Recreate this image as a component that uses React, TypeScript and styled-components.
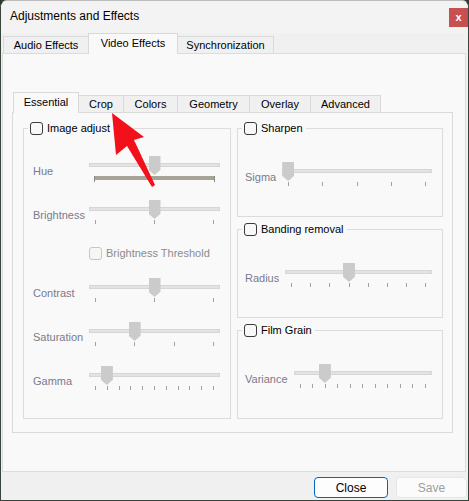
import React from 'react';
import styled, { createGlobalStyle } from 'styled-components';

const GlobalStyle = createGlobalStyle`
  html, body {
    margin: 0;
    padding: 0;
    background: #2d3b33;
  }
  * {
    box-sizing: border-box;
  }
  body {
    font-family: "Liberation Sans", Arial, sans-serif;
    font-size: 11px;
    color: #000;
  }
`;

const Window = styled.div`
    position: relative;
    width: 469px;
    height: 501px;
    display: flex;
    flex-direction: column;
    background: #f0f0f0;
    border: 1px solid #37443c;
    border-top-color: #bcbcbc;
    border-radius: 7px 7px 0 0;
    overflow: hidden;
`;

const TitleBar = styled.div`
    height: 32px;
    flex: none;
    display: flex;
    justify-content: space-between;
    align-items: flex-start;
    padding-left: 9px;
    background: #f3f3f3;
`;

const Title = styled.span`
    line-height: 31px;
    font-size: 12px;
`;

const CloseX = styled.div`
    width: 19px;
    height: 19px;
    margin-top: 7px;
    background: #c75050;
    color: #fff;
    font-size: 11px;
    font-weight: bold;
    display: flex;
    align-items: center;
    justify-content: center;
    padding-bottom: 2px;
`;

const TabBar = styled.div<{ $inset: number }>`
    height: 20px;
    flex: none;
    display: flex;
    align-items: flex-end;
    padding-left: ${p => p.$inset}px;
`;

const Tab = styled.div<{ $active?: boolean; $w: number }>`
    width: ${p => p.$w}px;
    height: ${p => (p.$active ? 21 : 17)}px;
    margin-bottom: ${p => (p.$active ? -1 : 0)}px;
    margin-left: -1px;
    position: relative;
    z-index: ${p => (p.$active ? 2 : 1)};
    display: flex;
    align-items: center;
    justify-content: center;
    padding-bottom: ${p => (p.$active ? 2 : 0)}px;
    background: ${p => (p.$active ? '#f9f9f9' : '#f0f0f0')};
    border: 1px solid #d9d9d9;
    border-bottom: none;
    white-space: nowrap;
    &:first-child {
        margin-left: 0;
    }
`;

const OuterPane = styled.div`
    flex: none;
    height: 419px;
    margin: 0 2px 0 1px;
    padding: 38px 12px 0 9px;
    background: #f9f9f9;
    border: 1px solid #dcdcdc;
`;

const InnerPane = styled.div`
    height: 321px;
    padding: 8px 9px 0 10px;
    background: #f9f9f9;
    border: 1px solid #dadada;
    display: grid;
    grid-template-columns: 208px 206px;
    column-gap: 6px;
    align-items: start;
`;

const Column = styled.div`
    display: flex;
    flex-direction: column;
    gap: 5px;
`;

const Group = styled.fieldset<{ $h: number }>`
    margin: 0;
    padding: 0;
    min-width: 0;
    height: ${p => p.$h}px;
    border: 1px solid #dcdcdc;
`;

const Legend = styled.legend`
    margin-left: 4px;
    padding: 0 3px 0 2px;
    height: 14px;
    display: flex;
    align-items: center;
    gap: 4px;
    line-height: 14px;
`;

const Check = styled.span<{ $disabled?: boolean }>`
    display: inline-block;
    flex: none;
    width: 13px;
    height: 13px;
    border-radius: 3px;
    border: 1px solid ${p => (p.$disabled ? '#c6c6c6' : '#3a3a3a')};
    background: ${p => (p.$disabled ? '#f6f6f6' : '#f8f8f8')};
`;

const LeftRows = styled.div`
    display: flex;
    flex-direction: column;
    gap: 16px;
    padding: 21px 10px 0 9px;
`;

const LeftRow = styled.div`
    display: grid;
    grid-template-columns: 56px 131px;
    align-items: center;
`;

const RightRow = styled.div`
    display: flex;
    align-items: center;
    gap: 6px;
    padding: 27px 10px 0 7px;
`;

const Label = styled.span`
    color: #7a7a8e;
    white-space: nowrap;
    padding-top: 1px;
`;

const OptionRow = styled.div`
    height: 18px;
    padding-left: 56px;
    display: flex;
    align-items: center;
    gap: 4px;
    color: #8c8c8c;
`;

const SliderBox = styled.div`
    position: relative;
    flex: 1;
    height: 28px;
`;

const Track = styled.div`
    margin-top: 7px;
    height: 4px;
    background: #e3e3e3;
    border: 1px solid #d6d6d6;
`;

const Thumb = styled.div`
    position: absolute;
    top: 0;
    width: 12px;
    height: 19px;
    background: #cbcbcb;
    clip-path: polygon(0 0, 100% 0, 100% 72%, 50% 100%, 0 72%);
`;

const Ticks = styled.div`
    margin-top: 9px;
    padding: 0 6px;
    height: 4px;
    display: flex;
    justify-content: space-between;
`;

const Tick = styled.span`
    width: 1px;
    height: 4px;
    background: #a2a298;
`;

const HueBar = styled.div`
    position: relative;
    margin: 9px 5px 0 5px;
    height: 4px;
    background: #a7a396;
    &::before,
    &::after {
        content: '';
        position: absolute;
        top: 0;
        width: 1px;
        height: 6px;
        background: #8e8a7e;
    }
    &::before {
        left: 0;
    }
    &::after {
        right: 0;
    }
`;

const Footer = styled.div`
    flex: 1;
    display: flex;
    justify-content: flex-end;
    align-items: flex-start;
    gap: 8px;
    padding: 5px 1px 0 0;
`;

const Button = styled.div<{ $primary?: boolean; $w: number }>`
    width: ${p => p.$w}px;
    height: 21px;
    display: flex;
    align-items: center;
    justify-content: center;
    border-radius: 4px;
    font-size: 12px;
    background: ${p => (p.$primary ? '#fdfdfd' : '#fbfbfb')};
    border: 1px solid ${p => (p.$primary ? '#0067c0' : '#e6e6e6')};
    color: ${p => (p.$primary ? '#000' : '#9d9d9d')};
`;

const Arrow = styled.svg`
    position: absolute;
    left: 0;
    top: 0;
    pointer-events: none;
`;

const Slider = ({ value, ticks, hue }: { value: number; ticks?: number; hue?: boolean }) => (
    <SliderBox>
        <Track />
        {hue ? (
            <HueBar />
        ) : (
            <Ticks>
                {Array.from({ length: ticks || 0 }).map((_, i) => (
                    <Tick key={i} />
                ))}
            </Ticks>
        )}
        <Thumb style={{ left: `calc(${value} * (100% - 12px))` }} />
    </SliderBox>
);

const outerTabs = [
    { name: 'Audio Effects', w: 86 },
    { name: 'Video Effects', w: 90, active: true },
    { name: 'Synchronization', w: 97 },
];

const innerTabs = [
    { name: 'Essential', w: 66, active: true },
    { name: 'Crop', w: 46 },
    { name: 'Colors', w: 55 },
    { name: 'Geometry', w: 73 },
    { name: 'Overlay', w: 62 },
    { name: 'Advanced', w: 71 },
];

const leftSliders = [
    { name: 'Contrast', value: 0.5, ticks: 3 },
    { name: 'Saturation', value: 1 / 3, ticks: 4 },
    { name: 'Gamma', value: 0.1, ticks: 11 },
];

const rightGroups = [
    { name: 'Sharpen', label: 'Sigma', value: 0, ticks: 5 },
    { name: 'Banding removal', label: 'Radius', value: 3 / 7, ticks: 8 },
    { name: 'Film Grain', label: 'Variance', value: 0.2, ticks: 11 },
];

const App = () => {
    return (
        <>
            <GlobalStyle />
            <Window>
                <TitleBar>
                    <Title>Adjustments and Effects</Title>
                    <CloseX>x</CloseX>
                </TitleBar>

                <TabBar $inset={2}>
                    {outerTabs.map(t => (
                        <Tab key={t.name} $w={t.w} $active={t.active}>{t.name}</Tab>
                    ))}
                </TabBar>

                <OuterPane>
                    <TabBar $inset={1}>
                        {innerTabs.map(t => (
                            <Tab key={t.name} $w={t.w} $active={t.active}>{t.name}</Tab>
                        ))}
                    </TabBar>
                    <InnerPane>
                        <Group $h={298}>
                            <Legend><Check />Image adjust</Legend>
                            <LeftRows>
                                <LeftRow>
                                    <Label>Hue</Label>
                                    <Slider value={0.5} hue />
                                </LeftRow>
                                <LeftRow>
                                    <Label>Brightness</Label>
                                    <Slider value={0.5} ticks={3} />
                                </LeftRow>
                                <OptionRow><Check $disabled />Brightness Threshold</OptionRow>
                                {leftSliders.map(s => (
                                    <LeftRow key={s.name}>
                                        <Label>{s.name}</Label>
                                        <Slider value={s.value} ticks={s.ticks} />
                                    </LeftRow>
                                ))}
                            </LeftRows>
                        </Group>

                        <Column>
                            {rightGroups.map(g => (
                                <Group key={g.name} $h={96}>
                                    <Legend><Check />{g.name}</Legend>
                                    <RightRow>
                                        <Label>{g.label}</Label>
                                        <Slider value={g.value} ticks={g.ticks} />
                                    </RightRow>
                                </Group>
                            ))}
                        </Column>
                    </InnerPane>
                </OuterPane>

                <Footer>
                    <Button $primary $w={74}>Close</Button>
                    <Button $w={71}>Save</Button>
                </Footer>

                <Arrow width="469" height="501" viewBox="0 0 469 501">
                    <polygon
                        points="111,112 143,136 133,139 154,184 151,186 126,145 115,154"
                        fill="#f2101a"
                    />
                </Arrow>
            </Window>
        </>
    );
};

export default App;
